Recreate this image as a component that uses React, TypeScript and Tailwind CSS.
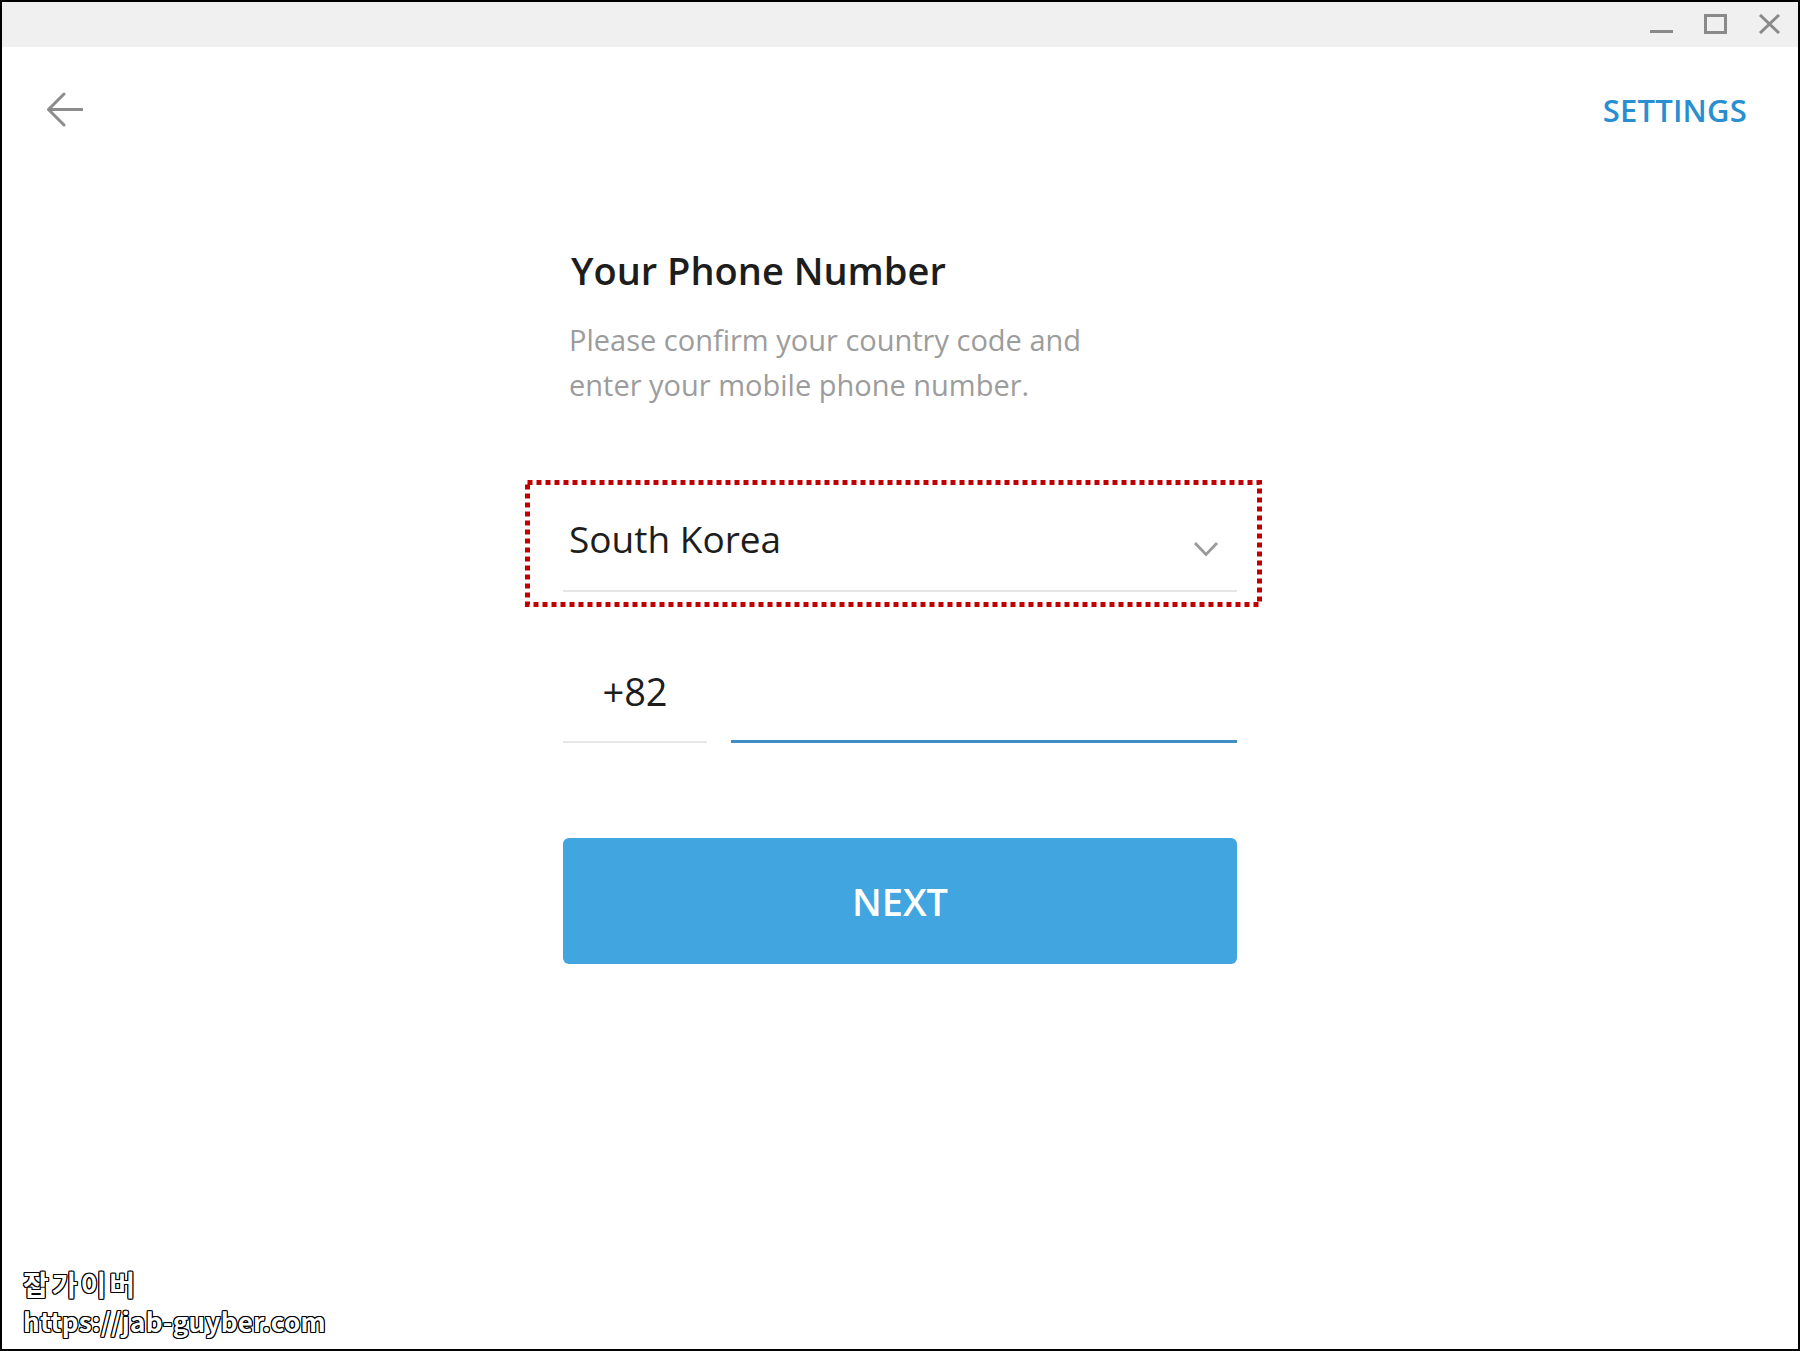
import { useState } from "react";

const WindowControls = () => (
  <div className="flex items-start gap-[31px] pr-[17px] pt-[12px]">
    <svg width="23" height="20" viewBox="0 0 23 20">
      <path d="M0 17.5 H23" stroke="#8a8a8a" strokeWidth="3" />
    </svg>
    <svg width="23" height="20" viewBox="0 0 23 20">
      <rect x="1.5" y="1.5" width="20" height="17" fill="none" stroke="#8a8a8a" strokeWidth="3" />
    </svg>
    <svg width="23" height="20" viewBox="0 0 23 20">
      <path d="M2 1 L21 19 M21 1 L2 19" stroke="#8a8a8a" strokeWidth="3" />
    </svg>
  </div>
);

const App = () => {
  const [phone, setPhone] = useState("");

  return (
    <div className="relative w-[1800px] h-[1351px] overflow-hidden bg-white border-2 border-black font-['Open_Sans',sans-serif] flex flex-col">
      {/* title bar */}
      <div className="h-[45px] shrink-0 bg-[#f0f0f0] flex justify-end">
        <WindowControls />
      </div>

      {/* header */}
      <div className="h-[126px] shrink-0 flex items-center justify-between pl-[44px] pr-[51px]">
        <button className="w-[37px] h-[36px]">
          <svg width="37" height="36" viewBox="0 0 37 36">
            <path
              d="M36 17.5 H3 M18 2 L2.5 17.5 L18 33"
              fill="none"
              stroke="#8c8c8c"
              strokeWidth="3"
              strokeLinecap="round"
              strokeLinejoin="round"
            />
          </svg>
        </button>
        <button className="text-[31px] leading-none font-semibold text-[#2a8fd0] tracking-[0.2px]">SETTINGS</button>
      </div>

      {/* form */}
      <div className="w-[674px] mx-auto flex flex-col">
        <h1 className="mt-[78px] pl-[8px] text-[38px] leading-[38px] font-semibold text-[#1d1d1d]">
          Your Phone Number
        </h1>
        <p className="mt-[28px] pl-[6px] text-[29px] leading-[45px] text-[#9c9c9c]">
          Please confirm your country code and
          <br />
          enter your mobile phone number.
        </p>

        <div className="relative mt-[77px]">
          <div className="flex items-start justify-between pt-[36px] pb-[32px] pl-[6px] pr-[18px] border-b-2 border-[#e6e6e6]">
            <span className="text-[37px] leading-[38px] text-[#1d1d1d]">South Korea</span>
            <svg className="mt-[21px]" width="26" height="16" viewBox="0 0 26 16">
              <path d="M2 2 L13 13.5 L24 2" fill="none" stroke="#9a9a9a" strokeWidth="2.8" />
            </svg>
          </div>
          {/* red dotted highlight */}
          <svg
            className="absolute -left-[38px] -top-[4px] pointer-events-none"
            width="737"
            height="127"
            viewBox="0 0 737 127"
          >
            <rect
              x="2.5"
              y="2.5"
              width="732"
              height="122"
              fill="none"
              stroke="#c00000"
              strokeWidth="5"
              strokeDasharray="5 4"
            />
          </svg>
        </div>

        <div className="mt-[80px] flex items-end gap-[24px]">
          <div className="w-[144px] pb-[31px] text-center text-[38px] leading-[38px] text-[#1d1d1d] border-b-2 border-[#e6e6e6]">
            +82
          </div>
          <input
            value={phone}
            onChange={(e) => setPhone(e.target.value)}
            className="flex-1 min-w-0 h-[69px] pb-[28px] outline-none text-[38px] text-[#1d1d1d] border-b-[3px] border-[#3f8fc6] bg-transparent"
          />
        </div>

        <button className="mt-[95px] h-[126px] rounded-[6px] bg-[#41a5e0] text-white text-[38px] font-semibold leading-none">
          NEXT
        </button>
      </div>

      {/* watermark */}
      <div className="absolute left-[21px] top-[1264px] font-['Noto_Sans_CJK_KR',sans-serif] font-bold text-white [text-shadow:-1px_-1px_0_#000,1px_-1px_0_#000,-1px_1px_0_#000,1px_1px_0_#000,0_1px_0_#000,1px_0_0_#000,-1px_0_0_#000,0_-1px_0_#000]">
        <div className="text-[28px] leading-[36px] tracking-[3px]">잡가이버</div>
        <div className="text-[26px] leading-[38px] tracking-[0.3px]">https://jab-guyber.com</div>
      </div>
    </div>
  );
};

export default App;
